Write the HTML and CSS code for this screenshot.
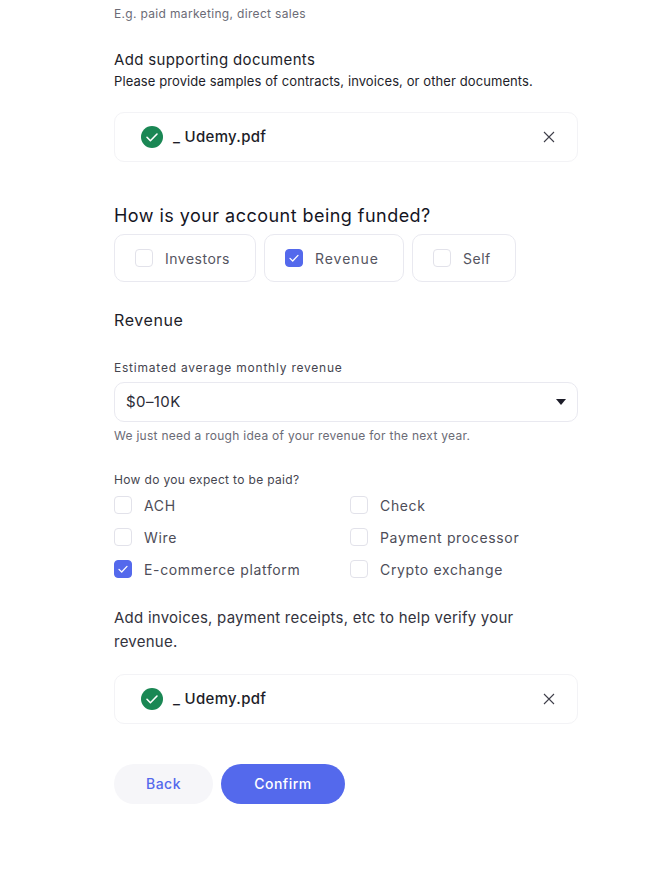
FILE: index.html
```html
<!DOCTYPE html>
<html lang="en">
<head>
<meta charset="utf-8">
<title>Account funding</title>
<link rel="stylesheet" href="styles.css">
</head>
<body>
<main class="form">
  <p class="hint hint-top">E.g. paid marketing, direct sales</p>

  <h3 class="subhead docs-head">Add supporting documents</h3>
  <p class="docs-desc">Please provide samples of contracts, invoices, or other documents.</p>

  <div class="file file-first">
    <svg class="file-ok" viewBox="0 0 22 22"><circle cx="11" cy="11" r="11" fill="#1a8754"/><path d="M6 11.3l3.4 3.4L16 8" fill="none" stroke="#fff" stroke-width="1.6" stroke-linecap="round" stroke-linejoin="round"/></svg>
    <span class="file-name">_ Udemy.pdf</span>
    <svg class="file-x" viewBox="0 0 12 12"><path d="M1 1l10 10M11 1L1 11" fill="none" stroke="#3f3f4a" stroke-width="1.1"/></svg>
  </div>

  <h2 class="title">How is your account being funded?</h2>
  <div class="tiles">
    <div class="tile tile-investors"><span class="box"></span><span class="tile-label">Investors</span></div>
    <div class="tile tile-revenue"><span class="box on"><svg viewBox="0 0 18 18"><path d="M5 9.4l2.7 2.6L13 6.4" fill="none" stroke="#fff" stroke-width="1.3" stroke-linecap="round" stroke-linejoin="round"/></svg></span><span class="tile-label">Revenue</span></div>
    <div class="tile tile-self"><span class="box"></span><span class="tile-label">Self</span></div>
  </div>

  <h3 class="revenue-head">Revenue</h3>

  <label class="field-label">Estimated average monthly revenue</label>
  <div class="select"><span class="select-value">$0–10K</span><span class="caret"></span></div>
  <p class="hint hint-select">We just need a rough idea of your revenue for the next year.</p>

  <p class="field-label paid-label">How do you expect to be paid?</p>
  <div class="checks">
    <div class="check"><span class="box"></span>ACH</div>
    <div class="check"><span class="box"></span>Check</div>
    <div class="check"><span class="box"></span>Wire</div>
    <div class="check"><span class="box"></span>Payment processor</div>
    <div class="check"><span class="box on"><svg viewBox="0 0 18 18"><path d="M5 9.4l2.7 2.6L13 6.4" fill="none" stroke="#fff" stroke-width="1.3" stroke-linecap="round" stroke-linejoin="round"/></svg></span>E-commerce platform</div>
    <div class="check"><span class="box"></span>Crypto exchange</div>
  </div>

  <p class="verify">Add invoices, payment receipts, etc to help verify your revenue.</p>

  <div class="file file-second">
    <svg class="file-ok" viewBox="0 0 22 22"><circle cx="11" cy="11" r="11" fill="#1a8754"/><path d="M6 11.3l3.4 3.4L16 8" fill="none" stroke="#fff" stroke-width="1.6" stroke-linecap="round" stroke-linejoin="round"/></svg>
    <span class="file-name">_ Udemy.pdf</span>
    <svg class="file-x" viewBox="0 0 12 12"><path d="M1 1l10 10M11 1L1 11" fill="none" stroke="#3f3f4a" stroke-width="1.1"/></svg>
  </div>

  <div class="actions">
    <button class="btn btn-back">Back</button>
    <button class="btn btn-confirm">Confirm</button>
  </div>
</main>
</body>
</html>
```

FILE: styles.css
```css
* { box-sizing: border-box; }
html, body { margin: 0; padding: 0; background: #fff; }
body { font-family: Inter, "Noto Sans", sans-serif; color: #1d1d29; height: 878px; overflow: hidden; }
p, h2, h3 { margin: 0; font-weight: 400; }
.form { width: 464px; margin-left: 114px; padding-top: 6px; }
.hint { font-size: 12px; line-height: 16px; color: #6b6b76; letter-spacing: 0.33px; }
.subhead { font-size: 15px; line-height: 20px; color: #1d1d29; letter-spacing: 0.35px; }
.docs-head { margin-top: 28px; }
.docs-desc { font-size: 13px; line-height: 18px; margin-top: 2px; letter-spacing: 0.09px; }
.file { height: 50px; border: 1px solid #f3f3f6; border-radius: 10px; display: flex; align-items: center; padding: 0 22px 0 26px; }
.file-first { margin-top: 22px; }
.file-ok { width: 22px; height: 22px; flex: none; }
.file-name { margin-left: 10px; font-size: 15px; font-weight: 500; letter-spacing: 0.3px; flex: 1; line-height: 20px; margin-bottom: 1px; }
.file-x { width: 12px; height: 12px; flex: none; }
.title { font-size: 18px; line-height: 26px; margin-top: 41px; letter-spacing: 0.46px; color: #15151f; }
.tiles { display: flex; gap: 8px; margin-top: 5px; }
.tile { height: 48px; border: 1px solid #e9e9f0; border-radius: 10px; display: flex; align-items: center; padding-left: 20px; gap: 12px; font-size: 14px; color: #55555f; letter-spacing: 0.5px; }
.tile-investors { width: 142px; }
.tile-revenue { width: 140px; letter-spacing: 0.95px; }
.tile-self { width: 104px; }
.box { width: 18px; height: 18px; border: 1px solid #e2e2ea; border-radius: 4px; flex: none; display: block; background: #fff; }
.box.on { background: #5469ec; border-color: #5469ec; }
.box svg { display: block; width: 18px; height: 18px; margin: -1px; }
.revenue-head { font-size: 16px; line-height: 20px; letter-spacing: 0.6px; margin-top: 28px; }
.field-label { display: block; font-size: 12px; line-height: 16px; color: #45454f; letter-spacing: 0.78px; margin-top: 30px; }
.select { height: 40px; border: 1px solid #e9e9f0; border-radius: 10px; margin-top: 6px; display: flex; align-items: center; justify-content: space-between; padding: 0 11px; font-size: 15px; color: #2b2b36; letter-spacing: 0.4px; }
.select-value { margin-bottom: 2px; }
.caret { width: 0; height: 0; border-left: 5.5px solid transparent; border-right: 5.5px solid transparent; border-top: 6px solid #1d1d29; }
.hint-select { margin-top: 6px; letter-spacing: 0.27px; }
.paid-label { margin-top: 28px; letter-spacing: 0.34px; }
.checks { display: grid; grid-template-columns: 236px 1fr; row-gap: 8px; margin-top: 5px; }
.check { display: flex; align-items: center; gap: 12px; height: 24px; font-size: 14px; color: #4d4d58; letter-spacing: 0.65px; }
.verify { font-size: 15px; line-height: 24px; color: #33333d; margin-top: 25px; letter-spacing: 0.24px; width: 420px; }
.file-second { margin-top: 20px; }
.actions { display: flex; gap: 8px; margin-top: 40px; }
.btn { height: 40px; border: 0; border-radius: 20px; font-family: inherit; font-size: 14px; font-weight: 500; letter-spacing: 0.5px; padding: 0 0 1px; }
.btn-back { width: 99px; background: #f6f6f9; color: #5469ec; }
.btn-confirm { width: 124px; background: #5469ec; color: #fff; }
```
